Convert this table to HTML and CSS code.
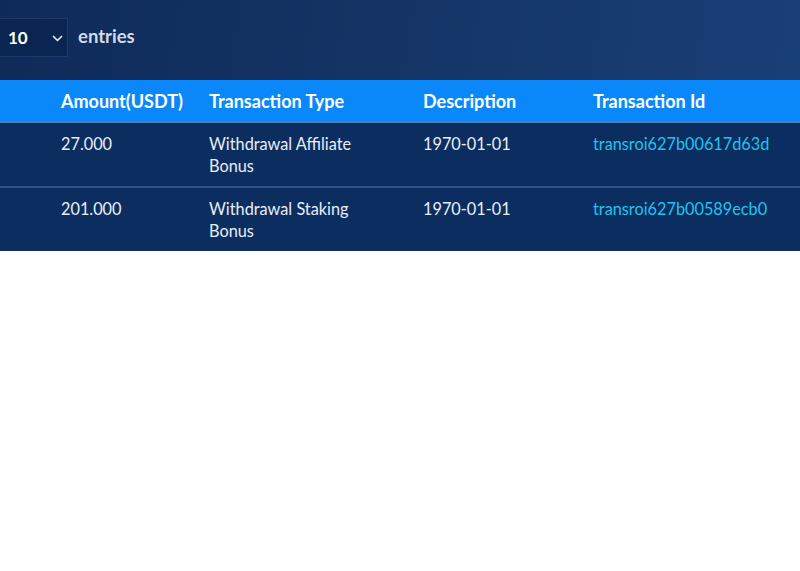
FILE: index.html
```html
<!DOCTYPE html>
<html lang="en">
<head>
<meta charset="utf-8">
<title>Transactions</title>
<link rel="stylesheet" href="styles.css">
</head>
<body>
<div class="panel">
  <div class="toolbar">
    <div class="select">
      <span class="select-value">10</span>
      <svg class="chevron" width="11" height="7" viewBox="0 0 11 7"><path d="M1.5 1.5 L5.5 5.5 L9.5 1.5" fill="none" stroke="#e3e9f2" stroke-width="1.7" stroke-linecap="round" stroke-linejoin="round"/></svg>
    </div>
    <span class="entries">entries</span>
  </div>
  <table class="table">
    <colgroup>
      <col class="c1"><col class="c2"><col class="c3"><col class="c4">
    </colgroup>
    <thead>
      <tr>
        <th>Amount(USDT)</th>
        <th>Transaction Type</th>
        <th>Description</th>
        <th>Transaction Id</th>
      </tr>
    </thead>
    <tbody>
      <tr>
        <td>27.000</td>
        <td>Withdrawal Affiliate Bonus</td>
        <td>1970-01-01</td>
        <td><a class="tx" href="#">transroi627b00617d63d</a></td>
      </tr>
      <tr>
        <td>201.000</td>
        <td>Withdrawal Staking Bonus</td>
        <td>1970-01-01</td>
        <td><a class="tx" href="#">transroi627b00589ecb0</a></td>
      </tr>
    </tbody>
  </table>
</div>
</body>
</html>
```
FILE: styles.css
```css
html, body {
  margin: 0;
  padding: 0;
  background: #ffffff;
}
body {
  font-family: Lato, "Noto Sans", sans-serif;
  font-size: 16.3px;
  width: 800px;
  overflow: hidden;
}
.panel {
  background: linear-gradient(100deg, #0e2a59 0%, #143566 50%, #1a4079 100%);
}
.toolbar {
  display: flex;
  align-items: center;
  gap: 10px;
  padding: 18px 0 23px 0;
  height: 39px;
}
.select {
  box-sizing: border-box;
  width: 68px;
  height: 39px;
  display: flex;
  align-items: center;
  justify-content: space-between;
  padding: 0 4px 0 8px;
  background: #0a2552;
  border: 1px solid #1d3a66;
  border-left: none;
}
.select-value {
  color: #ffffff;
  font-weight: 700;
  font-size: 17px;
}
.chevron {
  display: block;
  margin-top: 1px;
}
.entries {
  color: #d3dae6;
  font-weight: 700;
  font-size: 18.5px;
  margin-top: -4px;
}
.table {
  width: 800px;
  border-collapse: collapse;
  table-layout: fixed;
}
.c1 { width: 209px; }
.c2 { width: 214px; }
.c3 { width: 170px; }
.c4 { width: 207px; }
.table th,
.table td {
  text-align: left;
  vertical-align: top;
  padding: 10px 36px 9px 0;
  line-height: 22px;
  white-space: normal;
}
.table th:first-child,
.table td:first-child {
  padding-left: 61px;
}
.table td:last-child,
.table th:last-child {
  padding-right: 0;
}
.table thead tr {
  background: #0a88fa;
  border-bottom: 2px solid #4f7fae;
}
.table th {
  color: #ffffff;
  font-weight: 700;
  font-size: 18px;
  padding-top: 10px;
  padding-bottom: 9px;
}
.table tbody tr {
  background: #0b2d60;
}
.table tbody tr + tr {
  border-top: 2px solid #34527e;
}
.table td {
  color: #e9eef6;
  font-weight: 400;
}
.tx {
  color: #1fc4ef;
  text-decoration: none;
}
```
